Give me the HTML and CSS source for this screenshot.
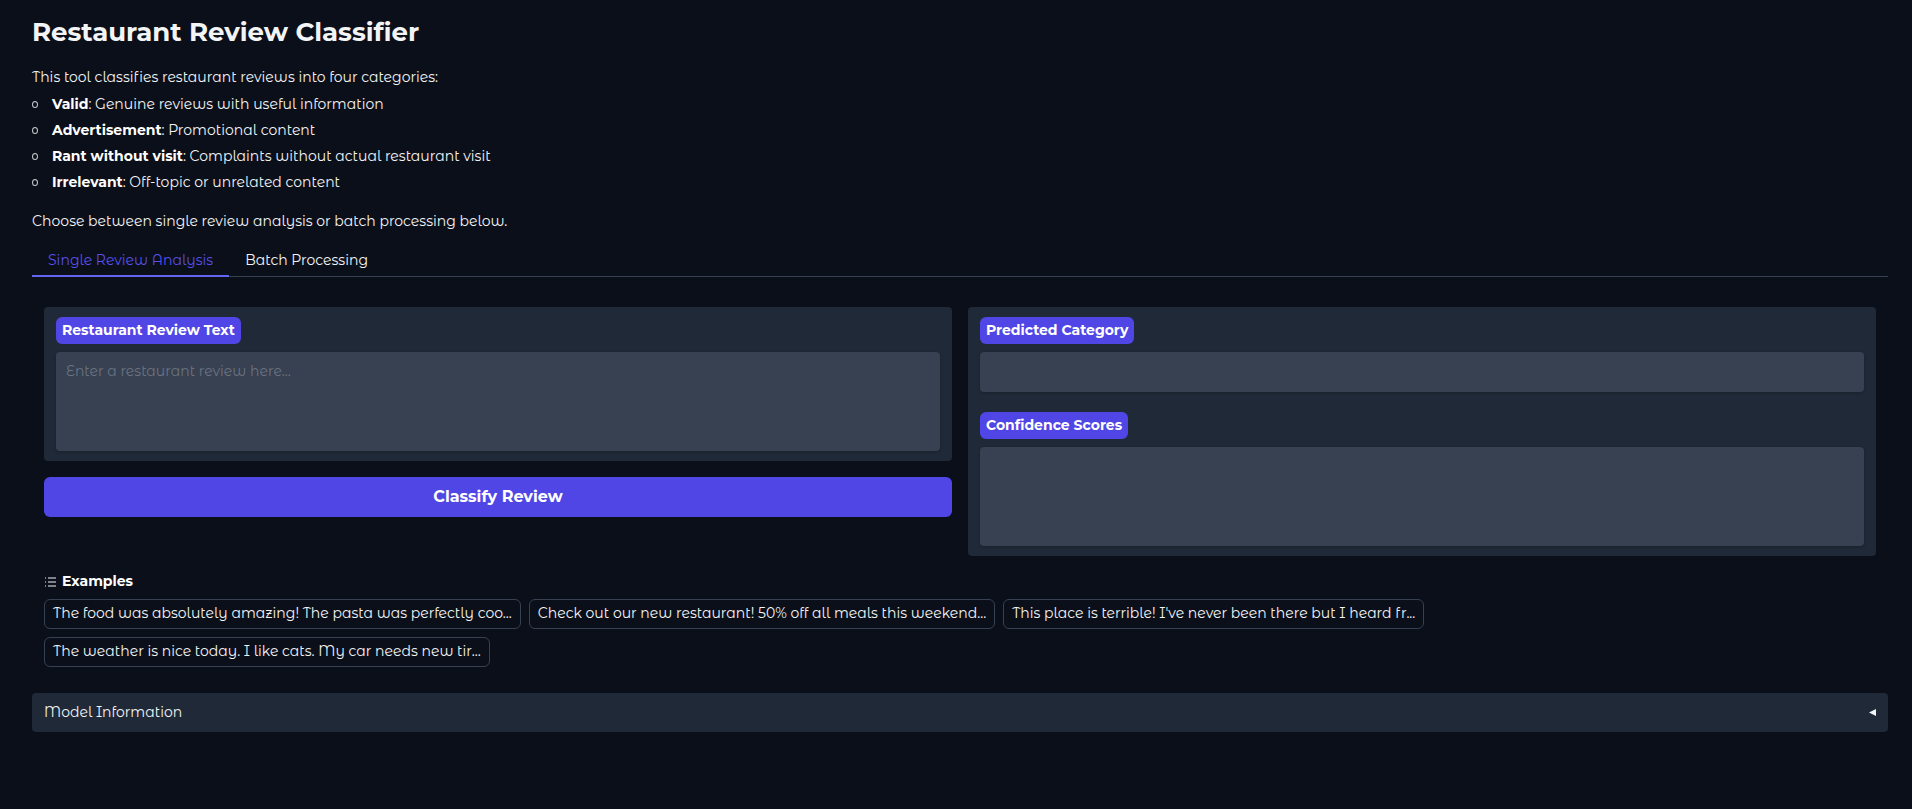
FILE: index.html
```html
<!DOCTYPE html>
<html lang="en">
<head>
  <meta charset="UTF-8">
  <title>Restaurant Review Classifier</title>
  <meta name="viewport" content="width=device-width, initial-scale=1">
  <link rel="stylesheet" href="styles.css">
</head>
<body>
  <main class="container">
    <div class="intro">
      <h1>Restaurant Review Classifier</h1>
      <p>This tool classifies restaurant reviews into four categories:</p>
      <ul>
        <li><strong>Valid</strong>: Genuine reviews with useful information</li>
        <li><strong>Advertisement</strong>: Promotional content</li>
        <li><strong>Rant without visit</strong>: Complaints without actual restaurant visit</li>
        <li><strong>Irrelevant</strong>: Off-topic or unrelated content</li>
      </ul>
      <p>Choose between single review analysis or batch processing below.</p>
    </div>

    <div class="tabs" role="tablist">
      <button class="tab selected" role="tab" aria-selected="true">Single Review Analysis</button>
      <button class="tab" role="tab" aria-selected="false">Batch Processing</button>
    </div>

    <div class="tab-panel" role="tabpanel">
      <div class="row">
        <div class="column">
          <div class="block">
            <div class="field">
              <label for="review">Restaurant Review Text</label>
              <textarea id="review" class="tall" placeholder="Enter a restaurant review here..."></textarea>
            </div>
          </div>
          <button class="primary">Classify Review</button>
        </div>
        <div class="column">
          <div class="block">
            <div class="field">
              <label for="category">Predicted Category</label>
              <input id="category" type="text" readonly>
            </div>
            <div class="field">
              <label for="scores">Confidence Scores</label>
              <textarea id="scores" class="tall" readonly></textarea>
            </div>
          </div>
        </div>
      </div>

      <div class="examples">
        <div class="examples-title">
          <svg width="12" height="12" viewBox="0 0 12 12" aria-hidden="true">
            <path fill="currentColor" d="M0 1h1v2H0zM3 1h8v2H3zM0 5h1v2H0zM3 5h8v2H3zM0 9h1v2H0zM3 9h8v2H3z"/>
          </svg>
          Examples
        </div>
        <div class="gallery">
          <button class="example">The food was absolutely amazing! The pasta was perfectly coo...</button>
          <button class="example">Check out our new restaurant! 50% off all meals this weekend...</button>
          <button class="example">This place is terrible! I've never been there but I heard fr...</button>
          <button class="example">The weather is nice today. I like cats. My car needs new tir...</button>
        </div>
      </div>
    </div>

    <button class="accordion" aria-expanded="false">
      <span>Model Information</span>
      <svg width="7" height="7" viewBox="0 0 7 7" aria-hidden="true"><path fill="currentColor" d="M7 0v7L0 3.5z"/></svg>
    </button>
  </main>
</body>
</html>
```

FILE: styles.css
```css
* { box-sizing: border-box; }
body {
  margin: 0;
  background: #0b0f19;
  color: #f3f4f6;
  font-family: "Montserrat Alternates", Inter, sans-serif;
  font-size: 14px;
  line-height: 22px;
}
button, input, textarea {
  font: inherit;
  color: inherit;
  border: none;
}
button { cursor: pointer; }
.container { padding: 16px 24px 24px 32px; }

/* intro text */
h1 {
  margin: 0 0 18px;
  font-family: Montserrat, Inter, sans-serif;
  font-size: 26px;
  line-height: 32px;
  font-weight: 700;
}
p { margin: 0; }
ul {
  list-style: none;
  margin: 5px 0 17px;
  padding: 0;
  display: grid;
  gap: 4px;
}
li::before {
  content: "";
  display: inline-block;
  width: 4px;
  height: 5px;
  margin: 0 14px 1px 0;
  border: 1px solid #c3c5ca;
  border-radius: 50%;
}
strong {
  font-family: Montserrat, Inter, sans-serif;
  font-weight: 700;
  color: #fff;
}

/* tabs */
.tabs {
  display: flex;
  margin-top: 8px;
  box-shadow: inset 0 -1px #374151;
}
.tab {
  background: none;
  padding: 9px 16px 4px;
  border-bottom: 2px solid transparent;
}
.tab.selected {
  color: #5850ec;
  border-bottom-color: #6366f1;
}
.tab-panel { padding: 30px 12px 26px; }

/* form */
.row { display: flex; gap: 16px; align-items: flex-start; }
.column {
  flex: 1;
  display: flex;
  flex-direction: column;
  gap: 16px;
}
.block {
  background: #1f2937;
  border-radius: 4px;
  padding: 10px 12px;
  display: grid;
  gap: 20px;
}
.field {
  display: flex;
  flex-direction: column;
  align-items: flex-start;
  gap: 8px;
}
label {
  background: #4f46e5;
  color: #fff;
  border-radius: 6px;
  padding: 2px 6px 3px;
  font-family: Montserrat, Inter, sans-serif;
  font-weight: 700;
}
input, textarea {
  display: block;
  width: 100%;
  height: 40px;
  padding: 8px 10px;
  background: #374151;
  border-radius: 4px;
  box-shadow: 0 1px 3px #0003;
  resize: none;
}
.tall { height: 99px; }
::placeholder { color: #6b7280; }
.primary {
  background: #4f46e5;
  color: #fff;
  border-radius: 6px;
  padding: 9px;
  font-family: Montserrat, Inter, sans-serif;
  font-size: 16px;
  font-weight: 700;
}

/* examples */
.examples { margin-top: 14px; }
.examples-title {
  display: flex;
  align-items: center;
  gap: 5px;
  margin-bottom: 7px;
  font-family: Montserrat, Inter, sans-serif;
  font-weight: 700;
  color: #fff;
}
.examples-title svg { color: #7d828c; margin: 1px 0 0 1px; }
.gallery { display: flex; flex-wrap: wrap; gap: 8px; }
.example {
  background: none;
  border: 1px solid #374151;
  border-radius: 6px;
  padding: 2px 8px 4px;
}

.accordion {
  display: flex;
  justify-content: space-between;
  align-items: center;
  width: 100%;
  background: #1f2937;
  border-radius: 4px;
  padding: 8px 12px 9px;
}
```
